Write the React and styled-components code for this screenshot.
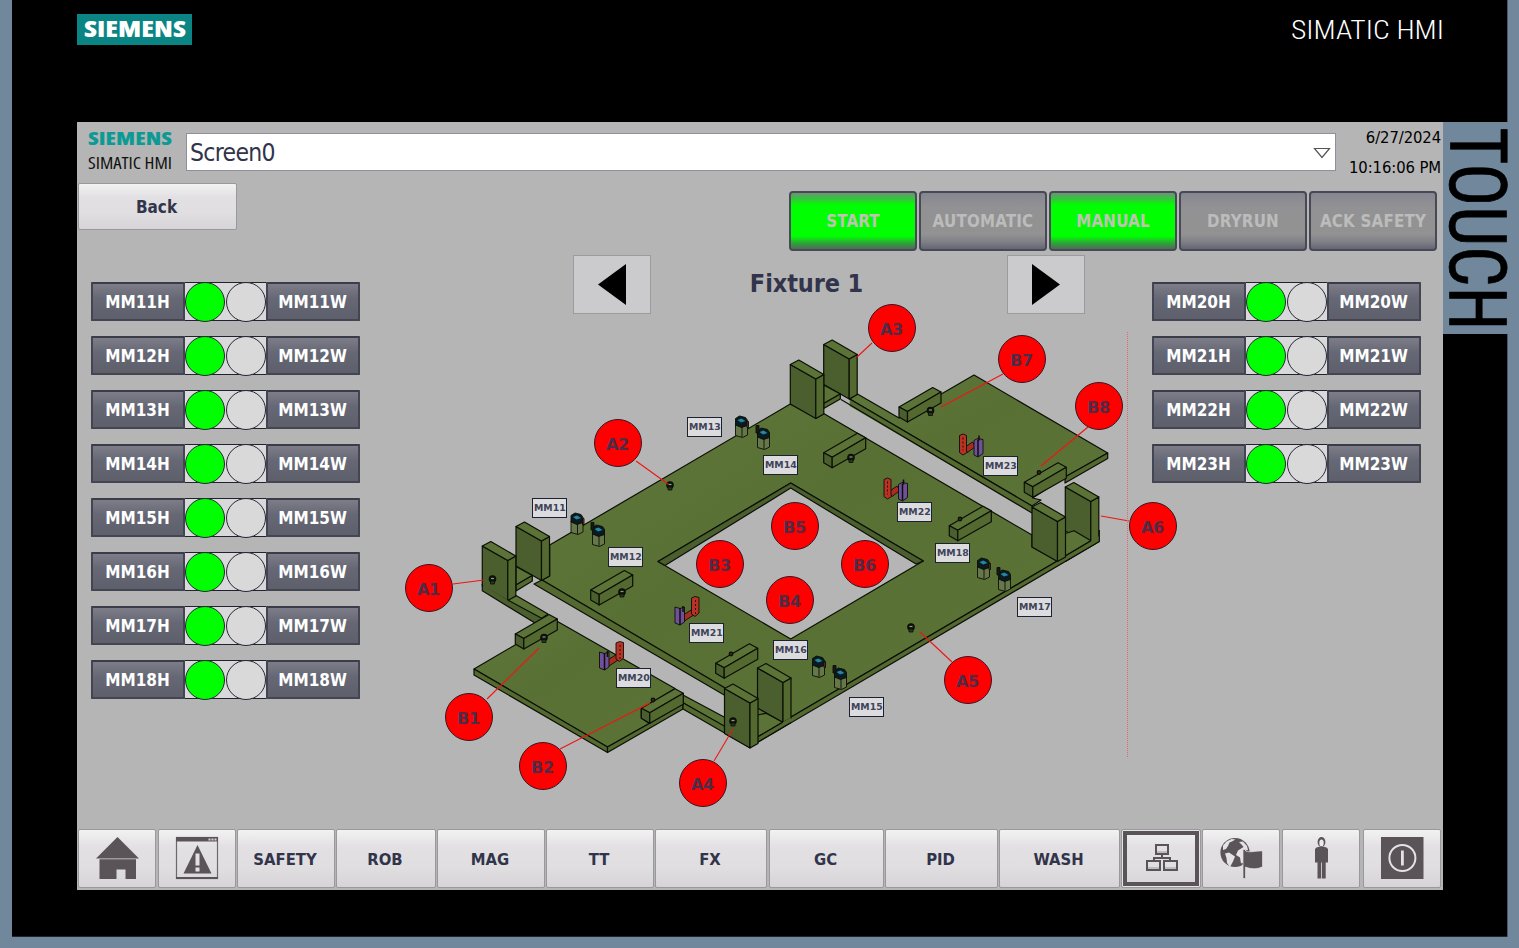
import React from "react";
import styled, { createGlobalStyle, css } from "styled-components";

const GlobalStyle = createGlobalStyle`
  *, *::before, *::after { box-sizing: border-box; }
  body {
    margin: 0;
    background: #71879b;
    font-family: "DejaVu Sans Condensed", "DejaVu Sans", sans-serif;
    font-stretch: condensed;
    color: #31344a;
  }
  button { font: inherit; color: inherit; padding: 0; margin: 0; }
`;

const Device = styled.div`
  width: 1519px;
  height: 948px;
  padding: 0 12px 11px 12px;
  background: #71879b;
  overflow: hidden;
`;

const Bezel = styled.div`
  height: 937px;
  background: #000;
  box-shadow: inset 0 -1px 0 #1c2730, 1px 0 0 #4b5a68;
`;

const BezelTop = styled.div`
  height: 122px;
  padding: 14px 63px 0 65px;
  display: flex;
  justify-content: space-between;
  align-items: flex-start;
`;

const Badge = styled.div`
  width: 115px;
  height: 31px;
  padding: 7px 0 0 7px;
  background: #0b8484;
`;

const Product = styled.div`
  padding-top: 7px;
`;

const BezelBody = styled.div`
  display: flex;
  align-items: flex-start;
  padding-left: 65px;
`;

const TouchStrip = styled.div`
  width: 76px;
  height: 212px;
  flex: none;
  padding: 7px 0 0 6px;
  background: #71879b;
`;

const Mark = styled.svg`
  display: block;
  overflow: visible;
`;

const Screen = styled.main`
  width: 1366px;
  height: 768px;
  flex: none;
  background: #b5b5b5;
  display: flex;
  flex-direction: column;
`;

const Header = styled.header`
  height: 61px;
  flex: none;
  display: flex;
  padding: 11px 2px 0 11px;
`;

const Brand = styled.div`
  width: 98px;
  display: flex;
  flex-direction: column;
  gap: 13px;
`;

const ScreenSelect = styled.div`
  width: 1150px;
  height: 38px;
  padding: 1px 4px 0 3px;
  border: 1px solid #8e8f98;
  background: #fff;
  display: flex;
  align-items: center;
  justify-content: space-between;
  font-size: 24.500px;
  line-height: 38px;
  letter-spacing: -0.7px;
`;

const Clock = styled.div`
  flex: 1;
  margin-top: -10px;
  text-align: right;
  font-size: 16.5px;
  line-height: 30px;
  letter-spacing: -0.1px;
  color: #000;
  white-space: nowrap;
`;

const Toolbar = styled.div`
  height: 69px;
  flex: none;
  display: flex;
  align-items: flex-start;
  justify-content: space-between;
  padding: 0 6px 0 1px;
`;

const raised = css`
  border: 1px solid #98989d;
  border-radius: 2px;
  background: linear-gradient(#f3f2f3 0, #e2e0e2 30%, #e0dee0 65%, #d6d4d6 100%);
`;

const BackButton = styled.button`
  ${raised}
  width: 159px;
  height: 47px;
  padding: 1px 2px 0 0;
  font-size: 17px;
  font-weight: bold;
`;

const Modes = styled.div`
  display: flex;
  gap: 2px;
  padding-top: 8px;
`;

const ModeButton = styled.button`
  width: 128px;
  height: 60px;
  border: 2px solid #474956;
  border-radius: 4px;
  background: ${(p) =>
    p.$on
      ? "linear-gradient(#6d9478 0, #35c33c 10%, #00ff00 22%, #00ff00 77%, #2fa13c 90%, #4c6c54 100%)"
      : "linear-gradient(#868691 0, #929294 26%, #929292 74%, #7e7e86 88%, #656573 100%)"};
  color: ${(p) => (p.$on ? "#bfc3b4" : "#bcbcbc")};
  font-size: 16.800px;
  font-weight: bold;
  letter-spacing: 0.2px;
  white-space: nowrap;
`;

const Work = styled.div`
  flex: 1;
  display: flex;
  padding: 0 22px 0 14px;
`;

const ModuleList = styled.div`
  width: 269px;
  flex: none;
  display: flex;
  flex-direction: column;
  gap: 15px;
  padding-top: 30px;
`;

const ModuleRow = styled.div`
  height: 39px;
  display: flex;
`;

const ModuleKey = styled.button`
  width: 94px;
  padding-right: 1px;
  border: 2px solid #434552;
  border-top-color: #3a3c48;
  border-radius: 1px;
  background: linear-gradient(#7d7d89 0, #666875 40%, #5d5f6b 100%);
  color: #fff;
  font-size: 17px;
  font-weight: bold;
`;

const Lamps = styled.div`
  width: 81px;
  flex: none;
  display: flex;
  justify-content: space-between;
  border: solid #20222e;
  border-width: 1px 0;
  background: #d9d9dc;
`;

const Lamp = styled.i`
  width: 40px;
  height: 40px;
  flex: none;
  margin-top: -1px;
  border: 1px solid #252733;
  border-radius: 50%;
  background: ${(p) => (p.$on ? "#00ff00" : "#d9d9d9")};
`;

const FixtureView = styled.section`
  flex: 1;
  display: flex;
  flex-direction: column;
`;

const FixturePicker = styled.div`
  width: 512px;
  height: 62px;
  margin-left: 213px;
  padding-top: 3px;
  display: flex;
  justify-content: space-between;
`;

const StepButton = styled.button`
  width: 78px;
  height: 59px;
  display: grid;
  place-items: center;
  border: 1px solid #9b9ba0;
  background: #cbcbcd;
`;

const FixtureName = styled.h1`
  margin: 0 47px 0 0;
  flex: 1;
  padding: 13px 0 0 2px;
  text-align: center;
  font-size: 25px;
  line-height: 32px;
  letter-spacing: -0.1px;
`;

const Canvas = styled.div`
  position: relative;
  width: 792px;
  flex: 1;
`;

const Drawing = styled.svg`
  position: absolute;
  left: 0;
  top: 0;
  overflow: visible;
`;

const Tag = styled.span`
  position: absolute;
  left: ${(p) => p.$x - 360}px;
  top: ${(p) => p.$y - 314}px;
  width: 35px;
  height: 20px;
  padding-left: 1px;
  border: 1px solid #1c2033;
  background: #dcdcde;
  color: #40445a;
  font: bold 9.4px/18px "DejaVu Sans", sans-serif;
  text-align: left;
  overflow: hidden;
`;

const Point = styled.span`
  position: absolute;
  left: ${(p) => p.$x - 384}px;
  top: ${(p) => p.$y - 338}px;
  width: 48px;
  height: 48px;
  border: 1px solid #3a1420;
  border-radius: 50%;
  background: #ff0000;
  color: #4c2c46;
  font: bold 16px/49px "DejaVu Sans", sans-serif;
  letter-spacing: -0.2px;
  text-align: center;
  padding-right: 1px;
`;

const Nav = styled.nav`
  height: 61px;
  flex: none;
  display: flex;
  padding: 0 2px 2px 1px;
`;

const NavButton = styled.button`
  ${raised}
  width: ${(p) => p.$w}px;
  margin-right: ${(p) => p.$gap || 1}px;
  padding: ${(p) => (p.$text ? "2px 2px 0 0" : "0 1px 1px 0")};
  flex: none;
  display: grid;
  place-items: center;
  font-size: 16.500px;
  font-weight: bold;
  line-height: 22px;
  ${(p) =>
    p.$current &&
    css`
      box-shadow: inset 0 0 0 1px #e6e4e6, inset 0 0 0 5px #5a5358;
    `}
`;

function Wordmark({ text, width, size, height, color, weight, family }) {
  return (
    <Mark width={width} height={height}>
      <text
        x="0"
        y={height}
        textLength={width}
        lengthAdjust="spacingAndGlyphs"
        fontSize={size}
        fontWeight={weight}
        fontFamily={family}
        fill={color}
      >
        {text}
      </text>
    </Mark>
  );
}

const INK = "#5a5358";

const icons = {
  home: (
    <g fill={INK}>
      <path d="M.500-21 22 0.5h-43Z" />
      <path d="M-17.500 1.200H19V21H8.500V11.500H-.500V21H-17.500Z" />
    </g>
  ),
  alarm: (
    <g>
      <rect x="-20.500" y="-20.500" width="41" height="41" fill="none" stroke="#6e686c" strokeWidth="1.200" />
      <path d="M-21-21H21v4.500H-21ZM-21 19H21v2H-21Z" fill={INK} />
      <path d="M11.500-19.500h2v2h-2zM14.500-19.500h2v2h-2zM17.500-19.500h2v2h-2z" fill="#d5d3d5" />
      <path d="M.500-13 14.500 15.500h-28Z" fill={INK} />
      <path d="M-1.500-4.500h4v12h-4zM-1.500 9.500h4v4h-4z" fill="#e2e0e2" />
    </g>
  ),
  network: (
    <g fill="none" stroke={INK} strokeWidth="2">
      <path d="M-5-6H6M-14 10h12M4 10h12" stroke="#bdbbbd" />
      <rect x="-5" y="-13" width="12" height="9" />
      <rect x="-14" y="3" width="13" height="9" />
      <rect x="3" y="3" width="13" height="9" />
      <path d="M1-4v3M-7 3V0H9v3" />
    </g>
  ),
  language: (
    <g>
      <circle cx="-6" cy="-5.500" r="14.600" fill={INK} />
      <path
        d="M-18-12.500-14.500-16.500l5-2.500 4 .5-3.500 2-2.500 1-1.500 3.500-2 3-3 1ZM-16-4.500l4-1 6 4-2 5-3 5.500-3-4-.5-5ZM2.500-11-3-7.500-5-3-1-.5l1 6 2-1V-7l5-1-1-4-4-4.500-4 .5 3 3Z"
        fill="#e4e2e4"
      />
      <path
        d="M2-8.500h2.500v1.500c5 2 9-.5 17 0V8.500c-2 2-10 3.500-17 .5V20.500H2Z"
        fill={INK}
        stroke="#e2e0e2"
        strokeWidth=".7"
      />
    </g>
  ),
  user: (
    <g fill={INK}>
      <ellipse cx=".5" cy="-16" rx="3.900" ry="5" />
      <ellipse cx=".5" cy="-15" rx="2.200" ry="3.600" fill="#ebe9eb" />
      <path d="M-4.500-10.500-1-11.500h3l3.500 1 1.500 1.500V4.500H-6V-9Z" />
      <path d="M-3.500 4H.2V20.500h-3.700zM1 4H4.700V20.500H1z" />
    </g>
  ),
  power: (
    <g>
      <rect x="-21" y="-21" width="42.500" height="42" fill={INK} />
      <circle cx=".4" cy="0" r="13" fill="none" stroke="#e4e2e4" strokeWidth="2" />
      <path d="M.4-7.500v15" stroke="#e4e2e4" strokeWidth="2.800" />
    </g>
  ),
};

function NavIcon({ name }) {
  return (
    <svg width="44" height="44" viewBox="-22 -22 44 44">
      {icons[name]}
    </svg>
  );
}

const TOP = "#5b7336";
const SIDE = "#4a5f2d";
const FRONT = "#53692f";

/* Rectangular support lying on the plate; x, y is its left top corner. */
function Bar({ x, y }) {
  return (
    <g transform={`translate(${x} ${y})`}>
      <path d="M0 0 33.700-19.500 42-15 8.500 4.500Z" fill={TOP} />
      <path d="M0 0 8.500 4.500V15L0 10Z" fill={SIDE} />
      <path d="M8.500 4.500 42-15V-4L8.500 15Z" fill={FRONT} />
    </g>
  );
}

/* Upright: broad face on the left, narrow one on the right. */
function Upright({ x, y, h = 40 }) {
  return (
    <g transform={`translate(${x} ${y})`}>
      <path d={`M0 0 25.500 14.500V${14.5 + h}L0 ${h}Z`} fill={SIDE} />
      <path d={`M25.500 14.500 33.500 10V${10 + h}L25.500 ${14.5 + h}Z`} fill={FRONT} />
      <path d="M0 0 8.500-4.500 33.500 10 25.500 14.500Z" fill={TOP} />
    </g>
  );
}

function Sensor({ x, y, second }) {
  return (
    <g transform={`translate(${x} ${y})`}>
      <path d="M0 8 6 10.500 12 8V19L7 21.500 0 19.500Z" fill="#66774a" />
      <path d="M6.500 10.500V21" />
      <path d="M0 2.500 4 0 10 1.500 12 4.500V9.500L6 11.500 0 9Z" fill="#0c1a20" />
      <path d="M2 4 6 2.500 10 5 5.500 6.500Z" fill="#2187a5" stroke="none" />
      {second ? <path d="M-1.500-2.500H1.500V5H-1.500Z" fill="#161a16" /> : <path d="M11.500 5.500h1.500v6H11.500Z" fill="#7a3b24" />}
    </g>
  );
}

/* Clamp pair with the purple jaw on the left and the red arm on the right. */
function ClampLeft({ x, y }) {
  return (
    <g transform={`translate(${x} ${y})`}>
      <path d="M6.500 19 17 12.500 21 16.500 9.500 24Z" fill="#a92c20" />
      <path d="M16.500 1 20-.500 24 .5V16L20 19.500 16.500 17Z" fill="#b93225" />
      <path d="M20.500 3V18" strokeDasharray="2 2" />
      <path d="M0 10 5 11.500 9.500 10V25L5 28 0 26Z" fill="#70509d" />
      <path d="M5 11V28M8 9V15" strokeWidth="1.500" />
    </g>
  );
}

/* Mirrored pair: red arm on the left, purple jaw on the right. */
function ClampRight({ x, y }) {
  return (
    <g transform={`translate(${x} ${y})`}>
      <path d="M5 13 13 7.500 16 12 8 18Z" fill="#a92c20" />
      <path d="M0 1 3.500-.500 7 1V16L7.500 18 3.500 20.500 0 18Z" fill="#b93225" />
      <path d="M3.500 3V16" strokeDasharray="2 2" />
      <path d="M14.500 6 18 4 23.500 5V19L18.500 22.500 14.500 20.500Z" fill="#70509d" />
      <path d="M18.500 5V22M19.500 1V6" strokeWidth="1.500" />
    </g>
  );
}

function Pin({ x, y }) {
  return (
    <g transform={`translate(${x} ${y})`}>
      <circle r="3.200" fill="#101510" />
      <path d="M-2 2h4v3h-4Z" fill="#27351d" strokeWidth=".8" />
      <path d="M-1.500-.5h3" stroke="#8c9c77" />
    </g>
  );
}

const bars = {
  back: [[899, 407], [823.7, 452.7], [949.3, 525.7], [1024.3, 482.3]],
  front: [[590.7, 590], [715.7, 663.3], [515.3, 634], [641.3, 708.3]],
};

const sensors = [
  [571, 513, 0], [592.5, 525, 1], [735.500, 416, 0], [757.5, 428, 1],
  [977.5, 558, 0], [998.500, 570, 1], [812.5, 656, 0], [834.500, 668, 1],
];

const pins = [[670, 485], [911, 627], [622, 592], [544, 637.5], [930.5, 410.500], [851, 457.500], [492.500, 579], [733, 721]];
const nubs = [[653, 700], [731, 654], [960, 519], [1039, 472.500]];

const leaders = [
  [453, 584, 484, 580], [636, 461, 668, 484], [872, 343, 857, 357], [714, 761, 733, 729],
  [952, 662, 920, 632], [1129, 521, 1101, 516], [487, 699, 539, 648], [560, 749, 650, 703],
  [1003, 374, 941, 407], [1088, 427, 1041, 466],
];

function Plates() {
  return (
    <Drawing width="792" height="515" viewBox="360 314 792 515">
      <defs>
        <linearGradient id="sheet" x1="0" y1="0" x2="1" y2="1">
          <stop offset="0" stopColor="#60783b" />
          <stop offset=".4" stopColor="#597034" />
          <stop offset="1" stopColor="#5b7337" />
        </linearGradient>
      </defs>
      <g stroke="#0b0f06" strokeWidth="1.200" strokeLinejoin="round" fill="none">
        {/* rear plate and its rail */}
        <path d="M849.700 399 857.500 394 899 418 941.300 394 974 375 1107.700 453 1065 477 1032.700 498 1041 500 1032 506Z" fill="url(#sheet)" />
        <path d="M849.700 399 1032 506V513L849.700 406Z" fill={FRONT} stroke="none" />
        <path d="M849.700 399 1032 506M841 399.500 1032 513" />
        <path d="M1107.700 453V458.500L1065 483V477Z" fill={FRONT} />

        {/* rear left foot */}
        <Upright x={823.7} y={344.5} />
        <path d="M823.700 385 840.300 394 823.700 403.500Z" fill={TOP} />
        <path d="M840.300 394V399L823.700 408.500V403.500Z" fill={FRONT} />

        {/* right foot floor */}
        <path d="M1057 548 1074 530.700 1091 540.700 1057.300 561Z" fill={TOP} />

        {/* main plate with its opening */}
        <path
          fillRule="evenodd"
          d="M790.300 404 816.300 418 823.700 413.500 1032 535V547L1057.300 561 790.700 717.300 757 737 725 688 542 580 549.700 576V545ZM790.700 483 658 561.500 790.700 639 923.300 561Z"
          fill="url(#sheet)"
        />
        <path d="M790.700 483 923.300 561 916 564 790.700 488 665 565.500 658 561.500Z" fill={SIDE} />
        <path d="M542 580 725 688V695.500L534 584Z" fill={FRONT} />
        <path d="M1099.300 541.500 749.300 747.300V741L790.700 717.300 1057.300 561 1091 540.700Z" fill={FRONT} />

        {/* front plate and its rails */}
        <path d="M507.700 600 516 595.500 548 614 535 623Z" fill={TOP} />
        <path d="M474 669 515 645 558 621.700 675 688.500 641.300 709V718L649.300 723.500 607.500 747Z" fill="url(#sheet)" />
        <path d="M474 669 607.500 747V752.500L474 675Z" fill={FRONT} />
        <path d="M607.500 747 649.300 723.500 683 703V709L607.500 752.500Z" fill={FRONT} />
        <path d="M683 695 725 717.500V727L683 702.700Z" fill={TOP} />
        <path d="M683 702.700 726 727 749.300 741V747.300L683 709Z" fill={FRONT} />

        <Upright x={516} y={526.5} h={39.5} />
        <path d="M516 566.500 532.300 575.500 516 585Z" fill={TOP} />
        <path d="M532.300 575.500V581L516 591V585Z" fill={FRONT} />
        <Upright x={482.3} y={546} h={40} />
        <path d="M482.800 585 507.700 600 543 619 535 623 482.800 590.700Z" fill={SIDE} stroke="none" />
        <path d="M482.300 584V590.700L535 623M507.700 600 543 619" />
        <Upright x={790.3} y={364.5} h={39.5} />

        {bars.back.map(([x, y]) => <Bar key={`${x}`} x={x} y={y} />)}
        {bars.front.map(([x, y]) => <Bar key={`${x}`} x={x} y={y} />)}

        <Upright x={1065.3} y={487} h={44} />
        <path d="M1065.300 533.500 1074 530.700 1091 540.700 1065.300 556Z" fill={TOP} />
        <path d="M1091 540.700 1099.300 536V541.700L1065.300 561V556Z" fill={FRONT} stroke="none" />
        <path d="M1099.300 530V541.500L1065.300 561.500M1091 540.700 1065.300 556" />
        <Upright x={1032} y={507} />

        <Upright x={757.500} y={668} />
        <path d="M757.500 715 766 713.300 782.700 722.300 757.500 737Z" fill={TOP} />
        <path d="M782.700 722.300 790.700 717.500 791 722.500 757.500 742V737Z" fill={FRONT} stroke="none" />
        <path d="M791 722.500 749.500 747M782.700 722.300 757.500 737" />
        <Upright x={724.5} y={688.500} h={45} />

        <g strokeWidth=".9">
          {sensors.map(([x, y, second]) => <Sensor key={x} x={x} y={y} second={second} />)}
          <ClampLeft x={599.5} y={642} />
          <ClampLeft x={675} y={597} />
          <ClampRight x={884} y={478.500} />
          <ClampRight x={959.500} y={434.500} />
        </g>
        {pins.map(([x, y]) => <Pin key={x} x={x} y={y} />)}
        {nubs.map(([x, y]) => <circle key={x} cx={x} cy={y} r="1.800" fill="#3a2415" />)}
      </g>
      <g stroke="#f01414" strokeWidth="1.100">
        {leaders.map(([x1, y1, x2, y2]) => <line key={x1} x1={x1} y1={y1} x2={x2} y2={y2} />)}
      </g>
      <line x1="1127.500" y1="332" x2="1127.500" y2="758" stroke="#e06a6a" strokeDasharray="1 1" />
    </Drawing>
  );
}

const tags = [
  ["MM11", 532, 498], ["MM12", 608, 547], ["MM13", 687, 417], ["MM14", 763, 455],
  ["MM15", 849, 697], ["MM16", 773, 640], ["MM17", 1017, 597], ["MM18", 935, 543],
  ["MM20", 616, 668], ["MM21", 689, 623], ["MM22", 897, 502], ["MM23", 983, 456],
];

const points = [
  ["A1", 429, 588], ["A2", 618, 443], ["A3", 892, 328], ["A4", 703, 783], ["A5", 968, 680],
  ["A6", 1153, 526], ["B1", 469, 717], ["B2", 543, 766], ["B3", 720, 564], ["B4", 790, 600],
  ["B5", 795, 526], ["B6", 865, 564], ["B7", 1022, 359], ["B8", 1099, 406],
];

const modes = [
  ["START", true], ["AUTOMATIC", false], ["MANUAL", true], ["DRYRUN", false], ["ACK SAFETY", false],
];

const navItems = [
  { icon: "home", w: 78, gap: 2 },
  { icon: "alarm", w: 78 },
  { label: "SAFETY", w: 98 },
  { label: "ROB", w: 100 },
  { label: "MAG", w: 108 },
  { label: "TT", w: 108 },
  { label: "FX", w: 112, gap: 2 },
  { label: "GC", w: 115 },
  { label: "PID", w: 113 },
  { label: "WASH", w: 121 },
  { icon: "network", w: 80, current: true },
  { icon: "language", w: 78, gap: 2 },
  { icon: "user", w: 78, gap: 3 },
  { icon: "power", w: 78 },
];

function Modules({ names }) {
  return (
    <ModuleList>
      {names.map((name) => (
        <ModuleRow key={name}>
          <ModuleKey>{name}H</ModuleKey>
          <Lamps>
            <Lamp $on />
            <Lamp />
          </Lamps>
          <ModuleKey>{name}W</ModuleKey>
        </ModuleRow>
      ))}
    </ModuleList>
  );
}

const LOGO_FONT = '"Open Sans", "Noto Sans", sans-serif';

export default function App() {
  return (
    <Device>
      <GlobalStyle />
      <Bezel>
        <BezelTop>
          <Badge>
            <Wordmark text="SIEMENS" width={102} height={16} size={22} weight={800} color="#fff" family={LOGO_FONT} />
          </Badge>
          <Product>
            <Wordmark text="SIMATIC HMI" width={153} height={18} size={25.5} weight={300} color="#fff" family="Roboto, sans-serif" />
          </Product>
        </BezelTop>
        <BezelBody>
          <Screen>
            <Header>
              <Brand>
                <Wordmark text="SIEMENS" width={84} height={12} size={17.5} weight={800} color="#0e9a94" family={LOGO_FONT} />
                <Wordmark text="SIMATIC HMI" width={84} height={11} size={15.5} weight={400} color="#111" family={LOGO_FONT} />
              </Brand>
              <ScreenSelect>
                Screen0
                <svg width="18" height="12" viewBox="0 0 18 12">
                  <path d="M1.500 1.500h15L9 10.500Z" fill="#fff" stroke="#555" strokeWidth="1.200" />
                </svg>
              </ScreenSelect>
              <Clock>
                <div>6/27/2024</div>
                <div>10:16:06 PM</div>
              </Clock>
            </Header>
            <Toolbar>
              <BackButton>Back</BackButton>
              <Modes>
                {modes.map(([label, on]) => (
                  <ModeButton key={label} $on={on}>{label}</ModeButton>
                ))}
              </Modes>
            </Toolbar>
            <Work>
              <Modules names={["MM11", "MM12", "MM13", "MM14", "MM15", "MM16", "MM17", "MM18"]} />
              <FixtureView>
                <FixturePicker>
                  <StepButton aria-label="Previous fixture">
                    <svg width="28" height="41"><path d="M28 0V41L0 20.500Z" /></svg>
                  </StepButton>
                  <FixtureName>Fixture 1</FixtureName>
                  <StepButton aria-label="Next fixture">
                    <svg width="28" height="41"><path d="M0 0V41L28 20.500Z" /></svg>
                  </StepButton>
                </FixturePicker>
                <Canvas>
                  <Plates />
                  {tags.map(([label, x, y]) => <Tag key={label} $x={x} $y={y}>{label}</Tag>)}
                  {points.map(([label, x, y]) => <Point key={label} $x={x} $y={y}>{label}</Point>)}
                </Canvas>
              </FixtureView>
              <Modules names={["MM20", "MM21", "MM22", "MM23"]} />
            </Work>
            <Nav>
              {navItems.map((item) => (
                <NavButton
                  key={item.label || item.icon}
                  $w={item.w}
                  $gap={item.gap}
                  $current={item.current}
                  $text={Boolean(item.label)}
                >
                  {item.label || <NavIcon name={item.icon} />}
                </NavButton>
              ))}
            </Nav>
          </Screen>
          <TouchStrip>
            <Mark width="60" height="200">
              <text
                transform="rotate(90)"
                x="-1.500"
                y="-1"
                fontSize="79.500"
                stroke="#000"
                strokeWidth=".7"
                textLength="203"
                lengthAdjust="spacingAndGlyphs"
                fontFamily="Roboto, sans-serif"
              >
                TOUCH
              </text>
            </Mark>
          </TouchStrip>
        </BezelBody>
      </Bezel>
    </Device>
  );
}
